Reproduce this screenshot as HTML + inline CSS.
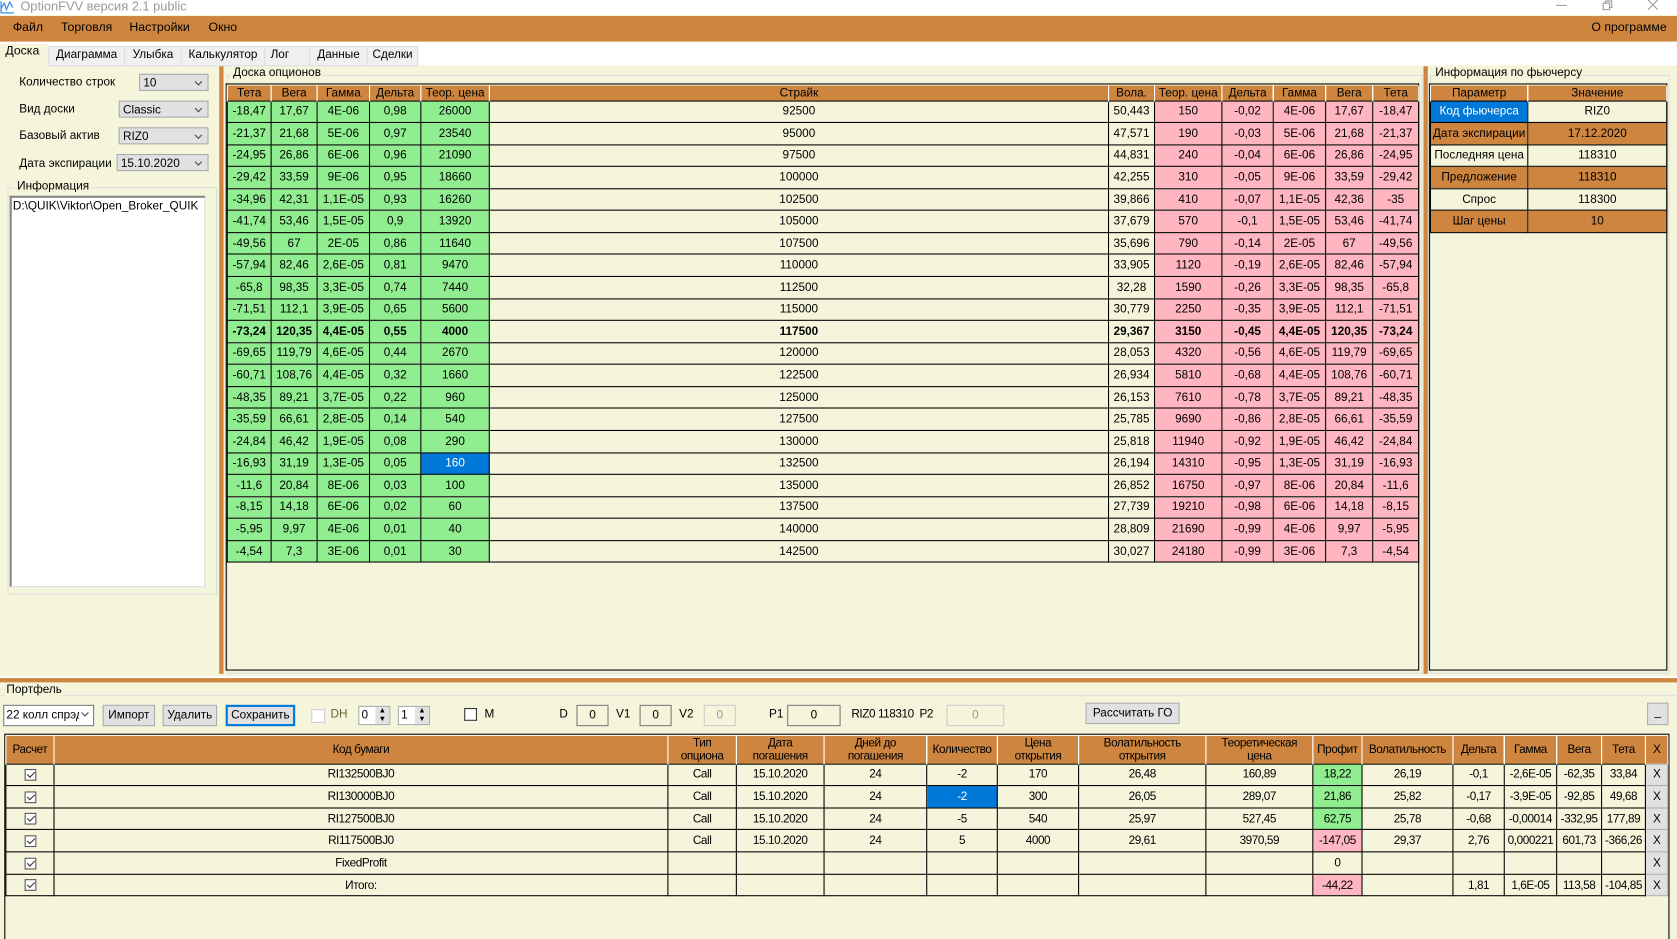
<!DOCTYPE html>
<html><head><meta charset="utf-8">
<style>
html,body{margin:0;padding:0;width:1677px;height:939px;overflow:hidden;background:#F5F5DC}
#w{position:absolute;left:0;top:0;width:1568px;height:878px;transform:scale(1.0695);transform-origin:0 0;background:#F5F5DC;font-family:"Liberation Sans",sans-serif;font-size:11px;color:#000;overflow:hidden}
.a{position:absolute}
table{border-collapse:collapse;table-layout:fixed;position:absolute}
td,th{border:1px solid #000;padding:0;text-align:center;white-space:nowrap;overflow:hidden;font-weight:normal;font-size:11px}
th{background:#CD853F;border-top:none;border-bottom:none;border-left:1px solid #fff;border-right:1px solid #fff}
.g{background:#90EE90}.p{background:#FFB6C1}.b{background:#0078D7;color:#fff}.o{background:#CD853F}
.bd td{font-weight:bold}
.sel{border:1px solid #aaa;background:#e1e1e1;height:16px;font-size:11px;line-height:16px;padding-left:3px;box-sizing:border-box}
.sel:after{content:"";position:absolute;right:6px;top:4px;width:4px;height:4px;border-right:1px solid #444;border-bottom:1px solid #444;transform:rotate(45deg)}
.btn{border:1px solid #adadad;background:#e1e1e1;text-align:center;line-height:17px;height:19px;box-sizing:border-box;font-size:11px}
.inp{border:1px solid #7a7a7a;background:#F5F5DC;text-align:center;height:18px;line-height:16px;box-sizing:border-box}
.chk{display:inline-block;width:11px;height:11px;border:1px solid #555;background:#fff;position:relative;vertical-align:middle;box-sizing:border-box}
.chk:after{content:"";position:absolute;left:3px;top:0px;width:3px;height:6px;border-right:1px solid #333;border-bottom:1px solid #333;transform:rotate(45deg)}
.pt td{font-size:11px;letter-spacing:-0.4px}
.pt th{font-size:11px;letter-spacing:-0.4px;line-height:12px}
.x{background:#e1e1e1;border:1px solid #adadad}
</style></head><body><div id="w">
<div class="a" style="left:0;top:0;width:1568px;height:14px;background:#fff"></div>
<svg class="a" style="left:0;top:0" width="14" height="13" viewBox="0 0 14 13"><path d="M1 1 V12 H13 M1 8 L4 3 L6 9 L9 2 L12 7" fill="none" stroke="#3a8ee6" stroke-width="1.2"/></svg>
<div class="a" style="left:19px;top:-1px;color:#999;font-size:12px">OptionFVV версия 2.1 public</div>
<svg class="a" style="left:1450px;top:0" width="110" height="12"><path d="M5 5 H15" stroke="#999"/><path d="M49 3 h6 v6 h-6z M51 3 v-2 h6 v6 h-2" fill="none" stroke="#999"/><path d="M91 0 L100 9 M100 0 L91 9" stroke="#999"/></svg>
<div class="a" style="left:0;top:15px;width:1568px;height:24px;background:#CD853F"></div>
<div class="a" style="left:12px;top:20px;font-size:11.5px">Файл</div>
<div class="a" style="left:57px;top:20px;font-size:11.5px">Торговля</div>
<div class="a" style="left:121px;top:20px;font-size:11.5px">Настройки</div>
<div class="a" style="left:195px;top:20px;font-size:11.5px">Окно</div>
<div class="a" style="left:1488px;top:20px;font-size:11.5px">О программе</div>
<div class="a" style="left:0;top:39px;width:1568px;height:22px;background:#fff"></div>
<div class="a" style="left:0;top:41px;width:45px;height:20px;background:#F5F5DC;font-size:11.5px;line-height:15px;padding-left:5px;box-sizing:border-box">Доска</div>
<div class="a" style="left:45px;top:43px;height:17px;border:1px solid #ddd;background:#f0f0f0;display:flex;font-size:11px;line-height:15px">
<span style="width:70px;text-align:center;border-right:1px solid #ddd">Диаграмма</span><span style="width:52px;text-align:center;border-right:1px solid #ddd">Улыбка</span><span style="width:77px;text-align:center;border-right:1px solid #ddd">Калькулятор</span><span style="width:42px;border-right:1px solid #ddd;padding-left:5px;box-sizing:border-box">Лог</span><span style="width:53px;text-align:center;border-right:1px solid #ddd">Данные</span><span style="width:46px;text-align:center">Сделки</span></div>
<div class="a" style="left:18px;top:71px">Количество строк</div>
<div class="a sel" style="left:130px;top:69px;width:65px">10</div>
<div class="a" style="left:18px;top:96px">Вид доски</div>
<div class="a sel" style="left:111px;top:94px;width:84px">Classic</div>
<div class="a" style="left:18px;top:121px">Базовый актив</div>
<div class="a sel" style="left:111px;top:119px;width:84px">RIZ0</div>
<div class="a" style="left:18px;top:147px">Дата экспирации</div>
<div class="a sel" style="left:109px;top:144px;width:86px">15.10.2020</div>
<div class="a" style="left:7px;top:175px;width:194px;height:379px;border:1px solid #ddd"></div>
<div class="a" style="left:14px;top:168px;background:#F5F5DC;padding:0 2px">Информация</div>
<div class="a" style="left:9px;top:183px;width:183px;height:366px;background:#fff;border-top:2px solid #888;border-left:2px solid #888;border-right:1px solid #ddd;border-bottom:1px solid #ddd;font-size:11px;padding:2px 1px;box-sizing:border-box">D:\QUIK\Viktor\Open_Broker_QUIK</div>
<div class="a" style="left:205px;top:62px;width:4px;height:568px;background:#CD853F"></div>
<div class="a" style="left:1331px;top:62px;width:4px;height:568px;background:#CD853F"></div>
<div class="a" style="left:0;top:632px;width:1568px;height:2px;background:#fff"></div>
<div class="a" style="left:0;top:634px;width:1568px;height:4px;background:#CD853F"></div>
<div class="a" style="left:212px;top:70px;width:1118px;height:560px;border:1px solid #ddd;box-sizing:border-box"></div>
<div class="a" style="left:216px;top:62px;background:#F5F5DC;padding:0 2px">Доска опционов</div>
<div class="a" style="left:211px;top:78px;width:1116px;height:549px;border:1px solid #000;box-sizing:border-box"></div>
<table style="left:212px;top:80px;width:1114px">
<colgroup><col style="width:41px"><col style="width:43px"><col style="width:49px"><col style="width:48px"><col style="width:64px"><col style="width:579px"><col style="width:43px"><col style="width:63px"><col style="width:48px"><col style="width:49px"><col style="width:44px"><col style="width:43px"></colgroup>
<tr style="height:14px"><th>Тета</th><th>Вега</th><th>Гамма</th><th>Дельта</th><th>Теор. цена</th><th>Страйк</th><th>Вола.</th><th>Теор. цена</th><th>Дельта</th><th>Гамма</th><th>Вега</th><th>Тета</th></tr>
<tbody id="bb">
<tr><td class="g">-18,47</td><td class="g">17,67</td><td class="g">4E-06</td><td class="g">0,98</td><td class="g">26000</td><td>92500</td><td>50,443</td><td class="p">150</td><td class="p">-0,02</td><td class="p">4E-06</td><td class="p">17,67</td><td class="p">-18,47</td></tr>
<tr><td class="g">-21,37</td><td class="g">21,68</td><td class="g">5E-06</td><td class="g">0,97</td><td class="g">23540</td><td>95000</td><td>47,571</td><td class="p">190</td><td class="p">-0,03</td><td class="p">5E-06</td><td class="p">21,68</td><td class="p">-21,37</td></tr>
<tr><td class="g">-24,95</td><td class="g">26,86</td><td class="g">6E-06</td><td class="g">0,96</td><td class="g">21090</td><td>97500</td><td>44,831</td><td class="p">240</td><td class="p">-0,04</td><td class="p">6E-06</td><td class="p">26,86</td><td class="p">-24,95</td></tr>
<tr><td class="g">-29,42</td><td class="g">33,59</td><td class="g">9E-06</td><td class="g">0,95</td><td class="g">18660</td><td>100000</td><td>42,255</td><td class="p">310</td><td class="p">-0,05</td><td class="p">9E-06</td><td class="p">33,59</td><td class="p">-29,42</td></tr>
<tr><td class="g">-34,96</td><td class="g">42,31</td><td class="g">1,1E-05</td><td class="g">0,93</td><td class="g">16260</td><td>102500</td><td>39,866</td><td class="p">410</td><td class="p">-0,07</td><td class="p">1,1E-05</td><td class="p">42,36</td><td class="p">-35</td></tr>
<tr><td class="g">-41,74</td><td class="g">53,46</td><td class="g">1,5E-05</td><td class="g">0,9</td><td class="g">13920</td><td>105000</td><td>37,679</td><td class="p">570</td><td class="p">-0,1</td><td class="p">1,5E-05</td><td class="p">53,46</td><td class="p">-41,74</td></tr>
<tr><td class="g">-49,56</td><td class="g">67</td><td class="g">2E-05</td><td class="g">0,86</td><td class="g">11640</td><td>107500</td><td>35,696</td><td class="p">790</td><td class="p">-0,14</td><td class="p">2E-05</td><td class="p">67</td><td class="p">-49,56</td></tr>
<tr><td class="g">-57,94</td><td class="g">82,46</td><td class="g">2,6E-05</td><td class="g">0,81</td><td class="g">9470</td><td>110000</td><td>33,905</td><td class="p">1120</td><td class="p">-0,19</td><td class="p">2,6E-05</td><td class="p">82,46</td><td class="p">-57,94</td></tr>
<tr><td class="g">-65,8</td><td class="g">98,35</td><td class="g">3,3E-05</td><td class="g">0,74</td><td class="g">7440</td><td>112500</td><td>32,28</td><td class="p">1590</td><td class="p">-0,26</td><td class="p">3,3E-05</td><td class="p">98,35</td><td class="p">-65,8</td></tr>
<tr><td class="g">-71,51</td><td class="g">112,1</td><td class="g">3,9E-05</td><td class="g">0,65</td><td class="g">5600</td><td>115000</td><td>30,779</td><td class="p">2250</td><td class="p">-0,35</td><td class="p">3,9E-05</td><td class="p">112,1</td><td class="p">-71,51</td></tr>
<tr class="bd"><td class="g">-73,24</td><td class="g">120,35</td><td class="g">4,4E-05</td><td class="g">0,55</td><td class="g">4000</td><td>117500</td><td>29,367</td><td class="p">3150</td><td class="p">-0,45</td><td class="p">4,4E-05</td><td class="p">120,35</td><td class="p">-73,24</td></tr>
<tr><td class="g">-69,65</td><td class="g">119,79</td><td class="g">4,6E-05</td><td class="g">0,44</td><td class="g">2670</td><td>120000</td><td>28,053</td><td class="p">4320</td><td class="p">-0,56</td><td class="p">4,6E-05</td><td class="p">119,79</td><td class="p">-69,65</td></tr>
<tr><td class="g">-60,71</td><td class="g">108,76</td><td class="g">4,4E-05</td><td class="g">0,32</td><td class="g">1660</td><td>122500</td><td>26,934</td><td class="p">5810</td><td class="p">-0,68</td><td class="p">4,4E-05</td><td class="p">108,76</td><td class="p">-60,71</td></tr>
<tr><td class="g">-48,35</td><td class="g">89,21</td><td class="g">3,7E-05</td><td class="g">0,22</td><td class="g">960</td><td>125000</td><td>26,153</td><td class="p">7610</td><td class="p">-0,78</td><td class="p">3,7E-05</td><td class="p">89,21</td><td class="p">-48,35</td></tr>
<tr><td class="g">-35,59</td><td class="g">66,61</td><td class="g">2,8E-05</td><td class="g">0,14</td><td class="g">540</td><td>127500</td><td>25,785</td><td class="p">9690</td><td class="p">-0,86</td><td class="p">2,8E-05</td><td class="p">66,61</td><td class="p">-35,59</td></tr>
<tr><td class="g">-24,84</td><td class="g">46,42</td><td class="g">1,9E-05</td><td class="g">0,08</td><td class="g">290</td><td>130000</td><td>25,818</td><td class="p">11940</td><td class="p">-0,92</td><td class="p">1,9E-05</td><td class="p">46,42</td><td class="p">-24,84</td></tr>
<tr><td class="g">-16,93</td><td class="g">31,19</td><td class="g">1,3E-05</td><td class="g">0,05</td><td class="b">160</td><td>132500</td><td>26,194</td><td class="p">14310</td><td class="p">-0,95</td><td class="p">1,3E-05</td><td class="p">31,19</td><td class="p">-16,93</td></tr>
<tr><td class="g">-11,6</td><td class="g">20,84</td><td class="g">8E-06</td><td class="g">0,03</td><td class="g">100</td><td>135000</td><td>26,852</td><td class="p">16750</td><td class="p">-0,97</td><td class="p">8E-06</td><td class="p">20,84</td><td class="p">-11,6</td></tr>
<tr><td class="g">-8,15</td><td class="g">14,18</td><td class="g">6E-06</td><td class="g">0,02</td><td class="g">60</td><td>137500</td><td>27,739</td><td class="p">19210</td><td class="p">-0,98</td><td class="p">6E-06</td><td class="p">14,18</td><td class="p">-8,15</td></tr>
<tr><td class="g">-5,95</td><td class="g">9,97</td><td class="g">4E-06</td><td class="g">0,01</td><td class="g">40</td><td>140000</td><td>28,809</td><td class="p">21690</td><td class="p">-0,99</td><td class="p">4E-06</td><td class="p">9,97</td><td class="p">-5,95</td></tr>
<tr><td class="g">-4,54</td><td class="g">7,3</td><td class="g">3E-06</td><td class="g">0,01</td><td class="g">30</td><td>142500</td><td>30,027</td><td class="p">24180</td><td class="p">-0,99</td><td class="p">3E-06</td><td class="p">7,3</td><td class="p">-4,54</td></tr>
</tbody></table>
<style>#bb tr{height:20.57px}</style>
<div class="a" style="left:1337px;top:70px;width:224px;height:560px;border:1px solid #ddd;box-sizing:border-box"></div>
<div class="a" style="left:1341px;top:62px;background:#F5F5DC;padding:0 1px">Информация по фьючерсу</div>
<div class="a" style="left:1336px;top:78px;width:223px;height:549px;border:1px solid #000;box-sizing:border-box"></div>
<table style="left:1337px;top:80px;width:221px" id="ft">
<colgroup><col style="width:91px"><col style="width:130px"></colgroup>
<tr style="height:14px"><th>Параметр</th><th>Значение</th></tr>
<tr><td class="b">Код фьючерса</td><td>RIZ0</td></tr>
<tr class="o"><td>Дата экспирации</td><td>17.12.2020</td></tr>
<tr><td>Последняя цена</td><td>118310</td></tr>
<tr class="o"><td>Предложение</td><td>118310</td></tr>
<tr><td>Спрос</td><td>118300</td></tr>
<tr class="o"><td>Шаг цены</td><td>10</td></tr>
</table>
<style>#ft tr{height:20.6px}</style>
<div class="a" style="left:0;top:650px;width:1568px;height:1px;background:#ddd"></div>
<div class="a" style="left:5px;top:639px;background:#F5F5DC;padding:0 1px">Портфель</div>
<div class="a" style="left:3px;top:659px;width:85px;height:20px;border:1px solid #7a7a7a;background:#fff;box-sizing:border-box;line-height:18px;padding-left:2px;overflow:hidden;white-space:nowrap">22 колл спрэд</div>
<div class="a" style="left:74px;top:661px;width:12px;height:16px;background:#fff"></div>
<div class="a" style="left:77px;top:664px;width:4px;height:4px;border-right:1px solid #444;border-bottom:1px solid #444;transform:rotate(45deg)"></div>
<div class="a btn" style="left:96px;top:659px;width:49px;height:20px;line-height:18px">Импорт</div>
<div class="a btn" style="left:152px;top:659px;width:51px;height:20px;line-height:18px">Удалить</div>
<div class="a btn" style="left:211px;top:659px;width:65px;height:20px;line-height:16px;border:2px solid #0078D7">Сохранить</div>
<div class="a" style="left:291px;top:663px;width:11px;height:11px;border:1px solid #ccc;background:#fff"></div>
<div class="a" style="left:309px;top:662px;color:#666633">DH</div>
<div class="a" style="left:335px;top:660px;width:30px;height:18px;border:1px solid #aaa;background:#fff;box-sizing:border-box;padding-left:2px;line-height:16px">0</div>
<div class="a" style="left:351px;top:661px;width:13px;height:16px;background:#e1e1e1;font-size:7px;line-height:8px;text-align:center">▲<br>▼</div>
<div class="a" style="left:372px;top:660px;width:30px;height:18px;border:1px solid #aaa;background:#fff;box-sizing:border-box;padding-left:2px;line-height:16px">1</div>
<div class="a" style="left:388px;top:661px;width:13px;height:16px;background:#e1e1e1;font-size:7px;line-height:8px;text-align:center">▲<br>▼</div>
<div class="a" style="left:434px;top:662px;width:12px;height:12px;border:1px solid #333;background:#fff;box-sizing:border-box"></div>
<div class="a" style="left:453px;top:662px">M</div>
<div class="a" style="left:523px;top:662px">D</div>
<div class="a inp" style="left:539px;top:659px;width:30px;height:20px;line-height:18px">0</div>
<div class="a" style="left:576px;top:662px">V1</div>
<div class="a inp" style="left:598px;top:659px;width:30px;height:20px;line-height:18px">0</div>
<div class="a" style="left:635px;top:662px">V2</div>
<div class="a inp" style="left:658px;top:659px;width:30px;height:20px;line-height:18px;border-color:#ccc;color:#999">0</div>
<div class="a" style="left:719px;top:662px">P1</div>
<div class="a inp" style="left:736px;top:659px;width:50px;height:20px;line-height:18px">0</div>
<div class="a" style="left:796px;top:662px;letter-spacing:-0.4px">RIZ0 118310&nbsp; P2</div>
<div class="a inp" style="left:885px;top:659px;width:54px;height:20px;line-height:18px;border-color:#ccc;color:#999">0</div>
<div class="a btn" style="left:1015px;top:657px;width:88px;height:20px;line-height:18px">Рассчитать ГО</div>
<div class="a btn" style="left:1540px;top:657px;width:20px;height:21px">_</div>
<div class="a" style="left:4px;top:686px;width:1557px;height:220px;border:1px solid #000;box-sizing:border-box"></div>
<table class="pt" style="left:5px;top:688px;width:1554px" id="pt">
<colgroup><col style="width:45px"><col style="width:574px"><col style="width:64px"><col style="width:82px"><col style="width:96px"><col style="width:66px"><col style="width:76px"><col style="width:119px"><col style="width:100px"><col style="width:46px"><col style="width:85px"><col style="width:48px"><col style="width:49px"><col style="width:42px"><col style="width:41px"><col style="width:21px"></colgroup>
<tr style="height:26px"><th>Расчет</th><th>Код бумаги</th><th>Тип<br>опциона</th><th>Дата<br>погашения</th><th>Дней до<br>погашения</th><th>Количество</th><th>Цена<br>открытия</th><th>Волатильность<br>открытия</th><th>Теоретическая<br>цена</th><th>Профит</th><th>Волатильность</th><th>Дельта</th><th>Гамма</th><th>Вега</th><th>Тета</th><th>X</th></tr>
<tr><td><span class="chk"></span></td><td>RI132500BJ0</td><td>Call</td><td>15.10.2020</td><td>24</td><td>-2</td><td>170</td><td>26,48</td><td>160,89</td><td class="g">18,22</td><td>26,19</td><td>-0,1</td><td>-2,6E-05</td><td>-62,35</td><td>33,84</td><td class="x">X</td></tr>
<tr><td><span class="chk"></span></td><td>RI130000BJ0</td><td>Call</td><td>15.10.2020</td><td>24</td><td class="b">-2</td><td>300</td><td>26,05</td><td>289,07</td><td class="g">21,86</td><td>25,82</td><td>-0,17</td><td>-3,9E-05</td><td>-92,85</td><td>49,68</td><td class="x">X</td></tr>
<tr><td><span class="chk"></span></td><td>RI127500BJ0</td><td>Call</td><td>15.10.2020</td><td>24</td><td>-5</td><td>540</td><td>25,97</td><td>527,45</td><td class="g">62,75</td><td>25,78</td><td>-0,68</td><td>-0,00014</td><td>-332,95</td><td>177,89</td><td class="x">X</td></tr>
<tr><td><span class="chk"></span></td><td>RI117500BJ0</td><td>Call</td><td>15.10.2020</td><td>24</td><td>5</td><td>4000</td><td>29,61</td><td>3970,59</td><td class="p">-147,05</td><td>29,37</td><td>2,76</td><td>0,000221</td><td>601,73</td><td>-366,26</td><td class="x">X</td></tr>
<tr><td><span class="chk"></span></td><td>FixedProfit</td><td></td><td></td><td></td><td></td><td></td><td></td><td></td><td>0</td><td></td><td></td><td></td><td></td><td></td><td class="x">X</td></tr>
<tr><td><span class="chk"></span></td><td>Итого:</td><td></td><td></td><td></td><td></td><td></td><td></td><td></td><td class="p">-44,22</td><td></td><td>1,81</td><td>1,6E-05</td><td>113,58</td><td>-104,85</td><td class="x">X</td></tr>
</table>
<style>#pt tr+tr{height:20.67px}</style>
</div></body></html>
